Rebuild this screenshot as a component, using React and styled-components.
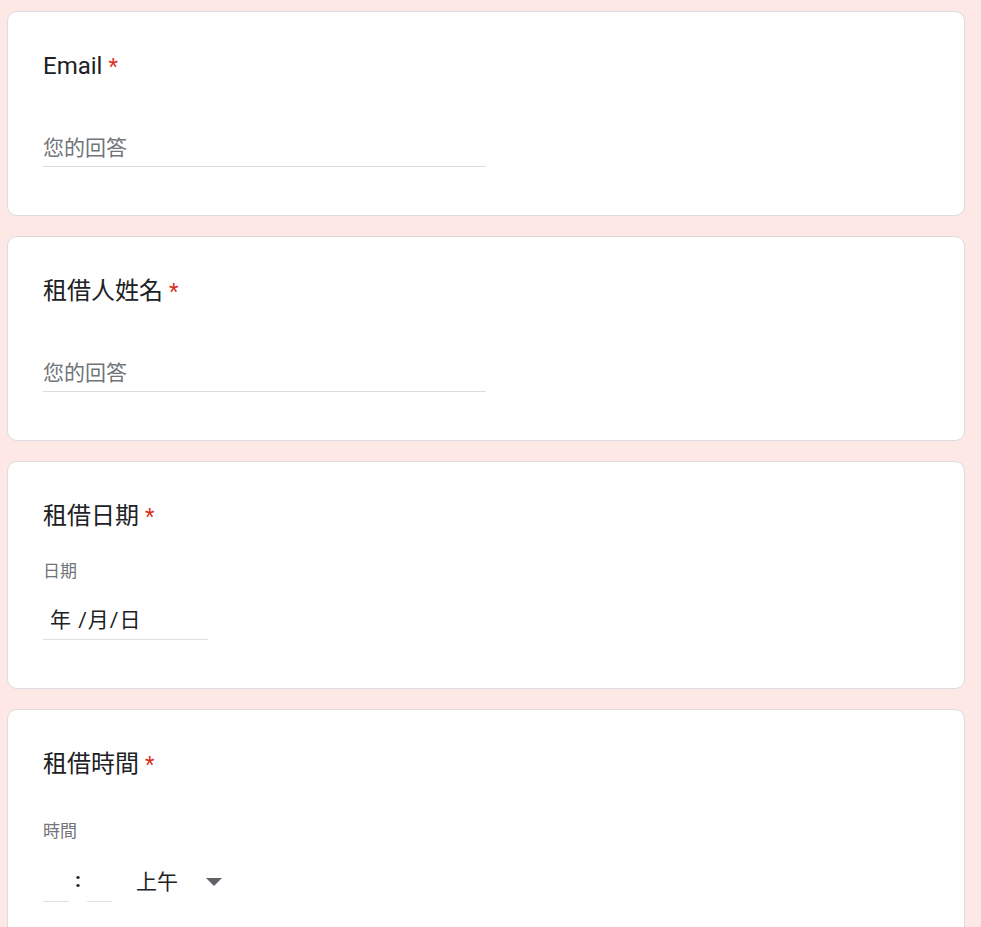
import React from "react";
import styled, { createGlobalStyle } from "styled-components";

const GlobalStyle = createGlobalStyle`
  html, body {
    margin: 0;
    padding: 0;
    background: #fde8e6;
  }
  body {
    font-family: Roboto, "Noto Sans CJK TC", "Noto Sans", sans-serif;
    color: #202124;
  }
`;

const Page = styled.div`
  display: flex;
  flex-direction: column;
  gap: 20px;
  padding: 11px 16px 0 7px;
  min-height: 927px;
  box-sizing: border-box;
`;

const Card = styled.section`
  background: #ffffff;
  border: 1px solid #dadce0;
  border-radius: 10px;
  padding: 38px 35px 48px;
  display: flex;
  flex-direction: column;
  align-items: flex-start;
`;

const Title = styled.div`
  font-size: 24px;
  line-height: 32px;
  color: #202124;
`;

const Required = styled.span`
  color: #d93025;
  margin-left: 6px;
  font-size: 22px;
`;

const TextInput = styled.div`
  margin-top: 49px;
  width: 443px;
  height: 35px;
  box-sizing: border-box;
  padding-bottom: 6px;
  display: flex;
  align-items: center;
  border-bottom: 1px solid #dadce0;
  font-size: 21px;
  color: #70757a;
`;

const SubLabel = styled.div`
  margin-top: ${(p) => p.$gap}px;
  font-size: 17px;
  line-height: 24px;
  color: #70757a;
`;

const DateField = styled.div`
  margin-top: 22px;
  width: 165px;
  height: 35px;
  box-sizing: border-box;
  padding: 0 0 8px 7px;
  display: flex;
  align-items: center;
  border-bottom: 1px solid #e0e0e0;
  font-size: 21px;
  color: #202124;
  white-space: pre;
`;

const DateInner = styled.span`
  letter-spacing: 1px;
`;

const TimeRow = styled.div`
  margin-top: 24px;
  display: flex;
  align-items: flex-end;
  height: 35px;
`;

const TimeBox = styled.div`
  width: ${(p) => p.$w}px;
  height: 34px;
  border-bottom: 1px solid #e0e0e0;
`;

const Colon = styled.span`
  width: 18px;
  height: 35px;
  box-sizing: border-box;
  padding-bottom: 10px;
  display: flex;
  align-items: center;
  justify-content: center;
  font-size: 21px;
  font-weight: 700;
  color: #202124;
`;

const Meridiem = styled.div`
  margin-left: 24px;
  height: 35px;
  box-sizing: border-box;
  padding-bottom: 10px;
  display: flex;
  align-items: center;
  gap: 28px;
  font-size: 21px;
  color: #202124;
`;

const Caret = styled.span`
  width: 0;
  height: 0;
  border-left: 8px solid transparent;
  border-right: 8px solid transparent;
  border-top: 8px solid #5f6368;
  margin-top: 4px;
`;

const Question = ({ title, children }) => (
  <Card>
    <Title>
      {title}
      <Required>*</Required>
    </Title>
    {children}
  </Card>
);

export default function App() {
  return (
    <>
      <GlobalStyle />
      <Page>
        <Question title="Email">
          <TextInput>您的回答</TextInput>
        </Question>
        <Question title="租借人姓名">
          <TextInput>您的回答</TextInput>
        </Question>
        <Question title="租借日期">
          <SubLabel $gap={26}>日期</SubLabel>
          <DateField>
            <DateInner>年 /月/日</DateInner>
          </DateField>
        </Question>
        <Question title="租借時間">
          <SubLabel $gap={38}>時間</SubLabel>
          <TimeRow>
            <TimeBox $w={26} />
            <Colon>:</Colon>
            <TimeBox $w={25} />
            <Meridiem>
              上午
              <Caret />
            </Meridiem>
          </TimeRow>
        </Question>
      </Page>
    </>
  );
}
